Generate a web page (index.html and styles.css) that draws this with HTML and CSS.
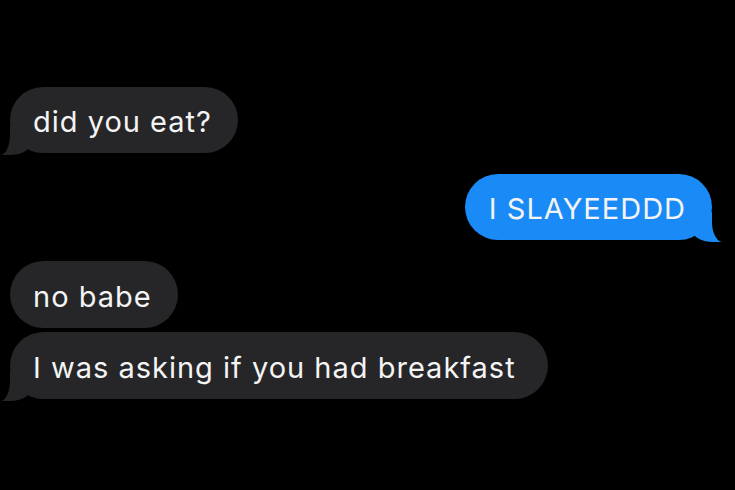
FILE: index.html
```
<!DOCTYPE html>
<html lang="en">
<head>
    <meta charset="UTF-8">
    <meta name="viewport" content="width=device-width, initial-scale=1.0">
    <title>Messages</title>
    <link rel="stylesheet" href="styles.css">
</head>
<body>
    <div class="chat">
        <div class="msg them tail">did you eat?</div>
        <div class="msg me tail">I SLAYEEDDD</div>
        <div class="msg them group">no babe</div>
        <div class="msg them tail last">I was asking if you had breakfast</div>
    </div>
</body>
</html>
```

FILE: styles.css
```
body {
    margin: 0;
    background-color: #000;
    font-family: 'Inter', 'Liberation Sans', sans-serif;
}
.chat {
    display: flex;
    flex-direction: column;
    padding-top: 87px;
    height: 490px;
    box-sizing: border-box;
}
.msg {
    position: relative;
    font-size: 29px;
    line-height: 36px;
    letter-spacing: 1px;
    padding: 17px 26px 13px 23px;
    border-radius: 34px;
    color: #f4f4f4;
    white-space: nowrap;
    margin-bottom: 21px;
}
.them {
    align-self: flex-start;
    margin-left: 10px;
    background-color: #262628;
}
.me {
    align-self: flex-end;
    margin-right: 23px;
    padding-left: 24px;
    background-color: #1a8bf6;
}
.group {
    margin-bottom: 4px;
    padding-top: 18px;
}
.last {
    padding-top: 18px;
    padding-right: 32px;
}

/* tails */
.tail::before,
.tail::after {
    content: "";
    position: absolute;
    bottom: -2px;
    height: 30px;
}
.them.tail::before {
    left: -10px;
    width: 32px;
    background-color: #262628;
    border-bottom-right-radius: 22px 14px;
}
.them.tail::after {
    left: -30px;
    width: 30px;
    background-color: #000;
    border-bottom-right-radius: 10px 20px;
}
.me.tail::before {
    right: -11px;
    width: 32px;
    background-color: #1a8bf6;
    border-bottom-left-radius: 22px 14px;
}
.me.tail::after {
    right: -30px;
    width: 30px;
    background-color: #000;
    border-bottom-left-radius: 11px 20px;
}
```
